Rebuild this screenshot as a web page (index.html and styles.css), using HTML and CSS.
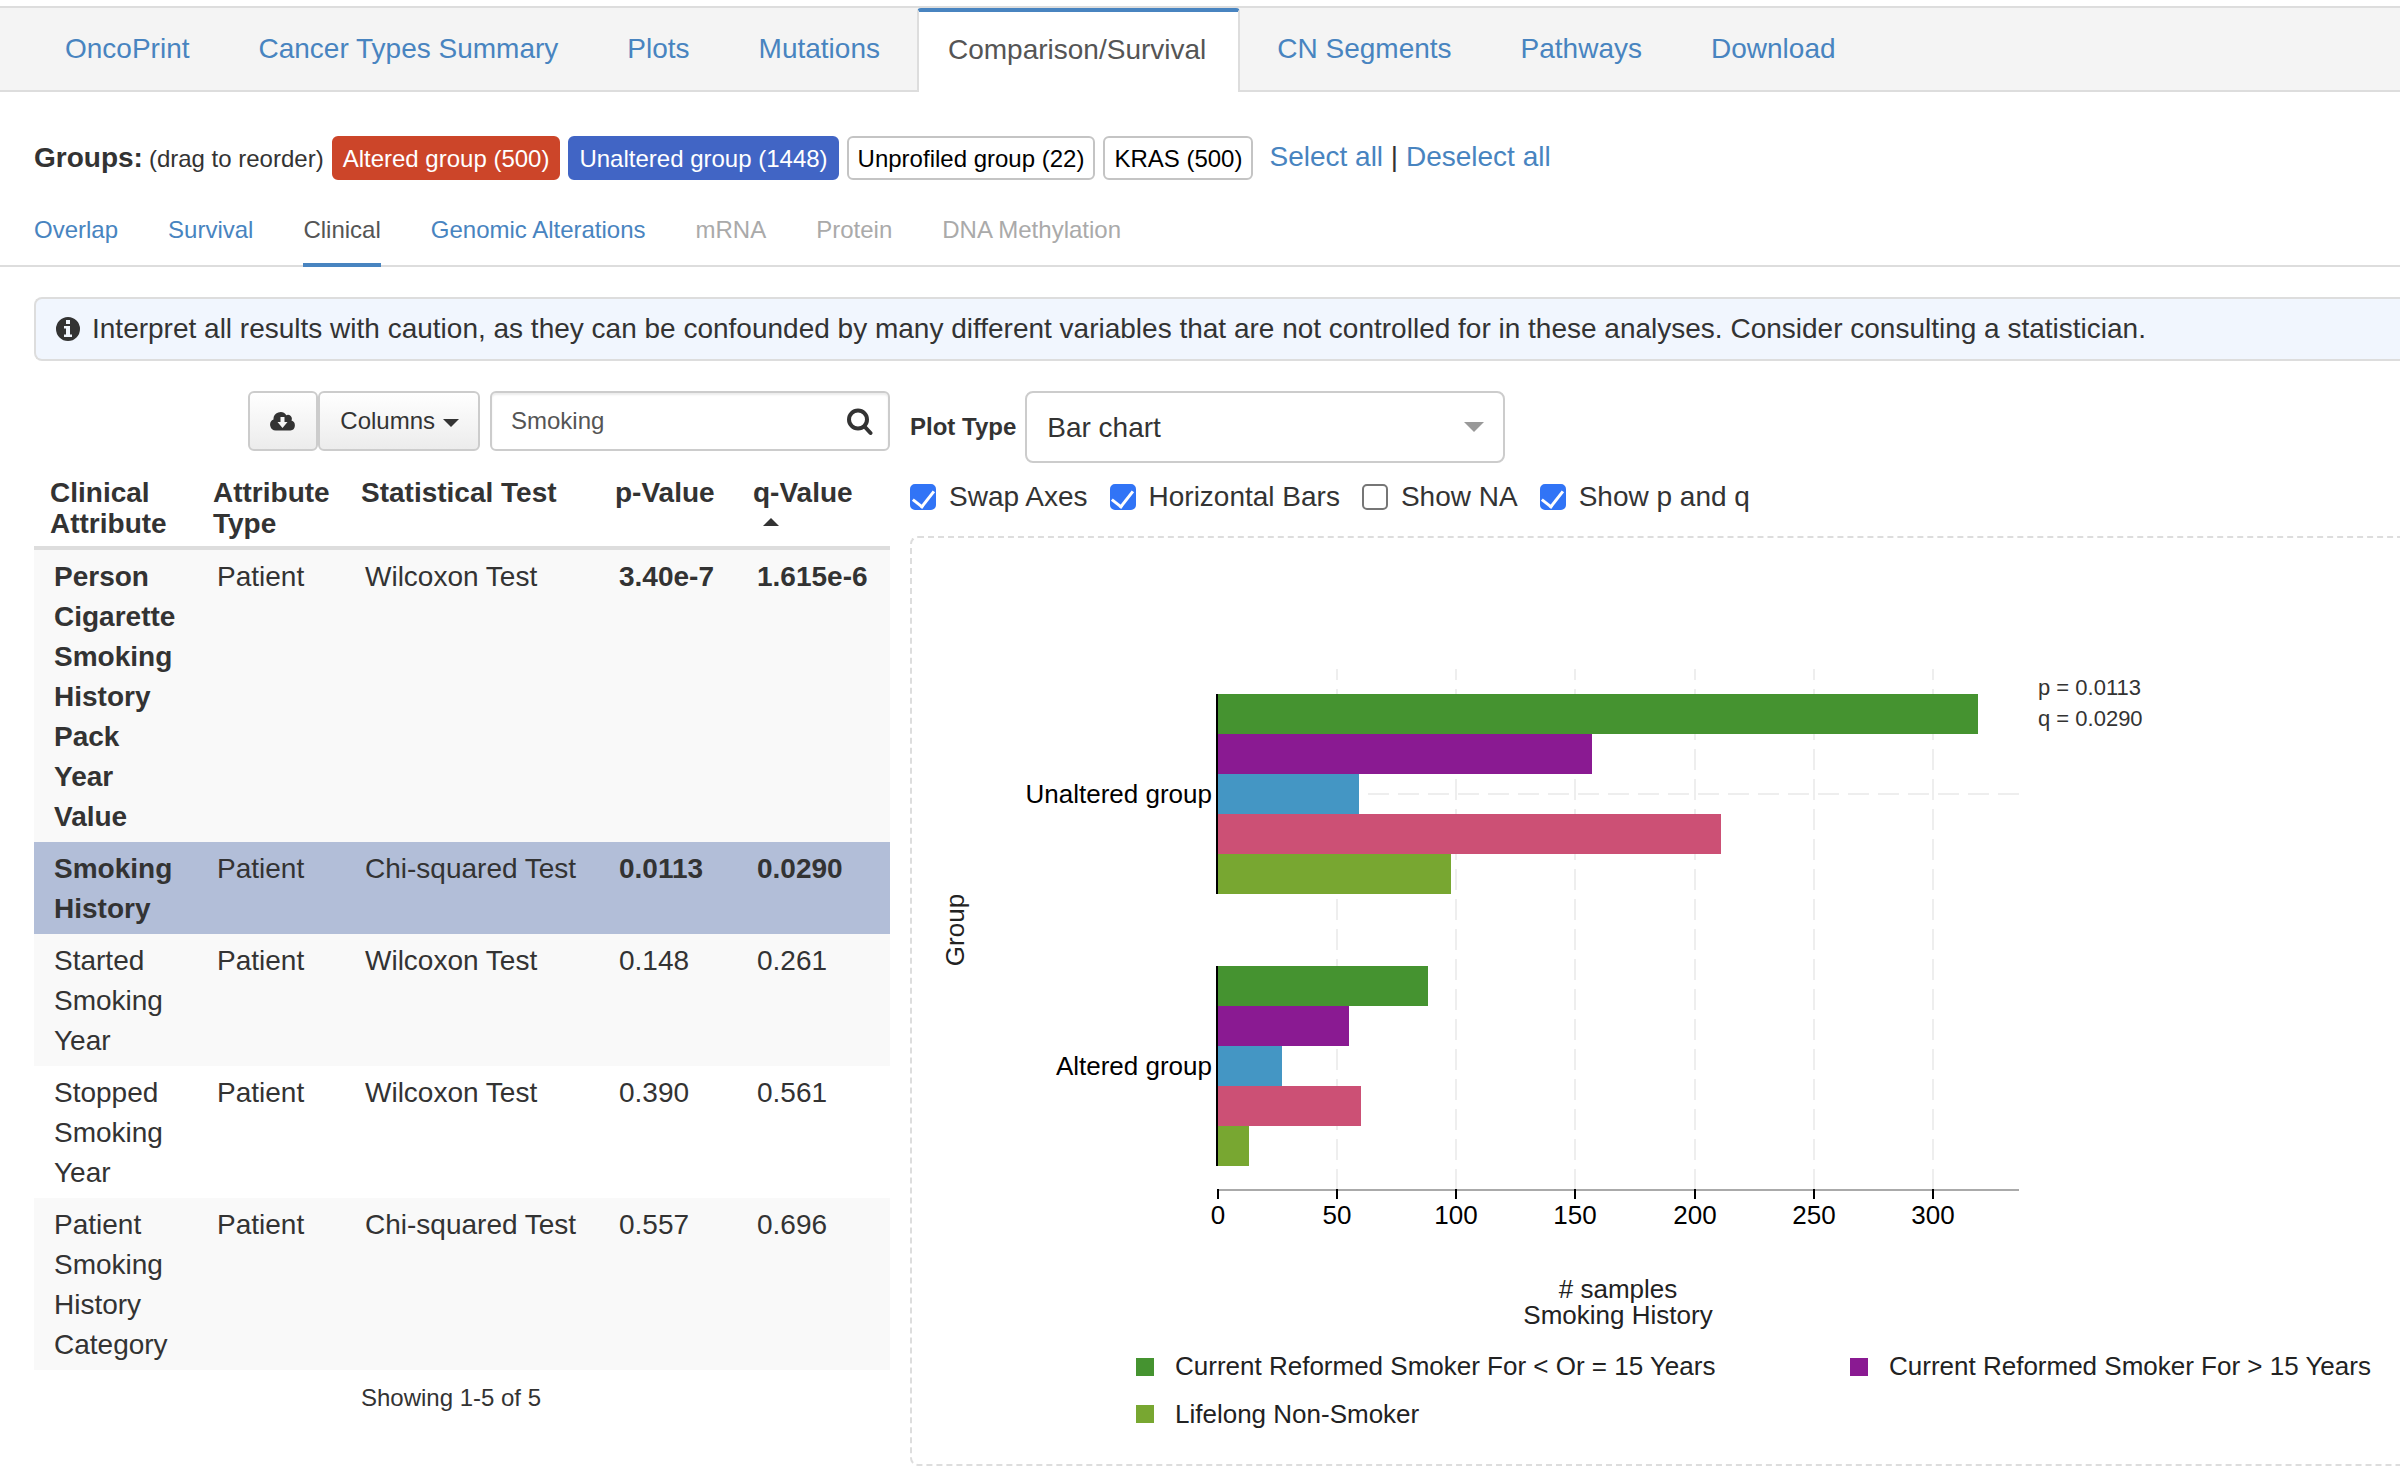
FILE: index.html
```html
<!DOCTYPE html>
<html lang="en">
<head>
<meta charset="utf-8">
<meta name="viewport" content="width=device-width, initial-scale=1">
<title>Comparison/Survival – Clinical</title>
<link rel="stylesheet" href="styles.css">
</head>
<body>
<nav class="main-tabs" aria-label="Results">
  <a class="main-tab" href="#oncoprint">OncoPrint</a>
  <a class="main-tab" href="#types">Cancer Types Summary</a>
  <a class="main-tab" href="#plots">Plots</a>
  <a class="main-tab" href="#mutations">Mutations</a>
  <a class="main-tab active" href="#comparison" aria-current="page">Comparison/Survival</a>
  <a class="main-tab" href="#segments">CN Segments</a>
  <a class="main-tab" href="#pathways">Pathways</a>
  <a class="main-tab" href="#download">Download</a>
</nav>

<section class="groups">
  <strong class="groups-title">Groups:</strong>
  <span class="groups-hint">(drag to reorder)</span>
  <div class="chips">
    <button type="button" class="chip chip-altered">Altered group (500)</button>
    <button type="button" class="chip chip-unaltered">Unaltered group (1448)</button>
    <button type="button" class="chip">Unprofiled group (22)</button>
    <button type="button" class="chip">KRAS (500)</button>
  </div>
  <div class="select-links"><a href="#all">Select all</a> | <a href="#none">Deselect all</a></div>
</section>

<nav class="sub-tabs" aria-label="Comparison">
  <a class="sub-tab" href="#overlap">Overlap</a>
  <a class="sub-tab" href="#survival">Survival</a>
  <a class="sub-tab active" href="#clinical" aria-current="page">Clinical</a>
  <a class="sub-tab" href="#genomic">Genomic Alterations</a>
  <a class="sub-tab disabled" aria-disabled="true">mRNA</a>
  <a class="sub-tab disabled" aria-disabled="true">Protein</a>
  <a class="sub-tab disabled" aria-disabled="true">DNA Methylation</a>
</nav>

<main class="content">
  <div class="notice">
    <svg class="notice-icon" viewBox="0 0 24 24" aria-hidden="true"><path fill="#333" fill-rule="evenodd" d="M12 0a12 12 0 1 1 0 24a12 12 0 0 1 0-24zM10 3v4h4v-4zM8 9v2.500h2v6h-2v2.500h8v-2.500h-2v-8.500z"/></svg>
    <span>Interpret all results with caution, as they can be confounded by many different variables that are not controlled for in these analyses. Consider consulting a statistician.</span>
  </div>

  <div class="panels">
    <section class="table-panel">
      <div class="toolbar">
        <div class="button-group">
          <button type="button" class="btn btn-download" aria-label="Download"><svg class="cloud" viewBox="0 0 26 20" aria-hidden="true"><path fill="#333" fill-rule="evenodd" d="M6 19.500A5.700 5.700 0 0 1 3.500 8.600A7 7 0 0 1 16.300 4.200A4 4 0 0 1 21.500 9.500A5.200 5.200 0 0 1 20.500 19.500zM10.500 6v5h-3l5 6l5-6h-3v-5z"/></svg></button>
          <button type="button" class="btn">Columns<span class="caret-down"></span></button>
        </div>
        <div class="search">
          <input type="text" class="search-input" value="Smoking" aria-label="Search attributes">
          <svg class="search-icon" viewBox="0 0 26 28" aria-hidden="true"><circle cx="11" cy="11.500" r="9" fill="none" stroke="#333" stroke-width="4"/><path d="M17.500 18.500l6 6.500" stroke="#333" stroke-width="4" stroke-linecap="round"/></svg>
        </div>
      </div>
      <table class="attributes">
        <colgroup><col class="c-name"><col class="c-type"><col class="c-test"><col class="c-p"><col class="c-q"></colgroup>
        <thead>
          <tr><th>Clinical Attribute</th><th>Attribute Type</th><th>Statistical Test</th><th>p-Value</th><th>q-Value<span class="caret-up"></span></th></tr>
        </thead>
        <tbody>
          <tr class="significant"><td>Person Cigarette Smoking History Pack Year Value</td><td>Patient</td><td>Wilcoxon Test</td><td>3.40e-7</td><td>1.615e-6</td></tr>
          <tr class="significant selected"><td>Smoking History</td><td>Patient</td><td>Chi-squared Test</td><td>0.0113</td><td>0.0290</td></tr>
          <tr><td>Started Smoking Year</td><td>Patient</td><td>Wilcoxon Test</td><td>0.148</td><td>0.261</td></tr>
          <tr><td>Stopped Smoking Year</td><td>Patient</td><td>Wilcoxon Test</td><td>0.390</td><td>0.561</td></tr>
          <tr><td>Patient Smoking History Category</td><td>Patient</td><td>Chi-squared Test</td><td>0.557</td><td>0.696</td></tr>
        </tbody>
      </table>
      <p class="table-count">Showing 1-5 of 5</p>
    </section>

    <section class="plot-panel">
      <div class="plot-type">
        <label for="plot-type">Plot Type</label>
        <div class="select-wrap">
          <select id="plot-type" class="select"><option>Bar chart</option></select>
        </div>
      </div>
      <div class="options">
        <label class="option"><input type="checkbox" class="check" checked>Swap Axes</label>
        <label class="option"><input type="checkbox" class="check" checked>Horizontal Bars</label>
        <label class="option"><input type="checkbox" class="check">Show NA</label>
        <label class="option"><input type="checkbox" class="check" checked>Show p and q</label>
      </div>
      <div class="plot-box">
        <svg class="plot" width="1488" height="926" viewBox="0 0 1488 926" role="img" aria-label="Smoking history by group">
          <g class="grid">
            <path d="M425 652V131M544 652V131M663 652V131M783 652V131M902 652V131M1021 652V131"/>
            <path d="M306 256H1107"/>
          </g>
          <g>
            <rect class="s1" x="306" y="156" width="760" height="40"/>
            <rect class="s2" x="306" y="196" width="374" height="40"/>
            <rect class="s3" x="306" y="236" width="141" height="40"/>
            <rect class="s4" x="306" y="276" width="503" height="40"/>
            <rect class="s5" x="306" y="316" width="233" height="40"/>
            <rect class="s1" x="306" y="428" width="210" height="40"/>
            <rect class="s2" x="306" y="468" width="131" height="40"/>
            <rect class="s3" x="306" y="508" width="64" height="40"/>
            <rect class="s4" x="306" y="548" width="143" height="40"/>
            <rect class="s5" x="306" y="588" width="31" height="40"/>
          </g>
          <path class="axis" d="M306 652H1107"/>
          <path class="tick" d="M305 156V356M305 428V628M306 651V661M425 651V661M544 651V661M663 651V661M783 651V661M902 651V661M1021 651V661"/>
          <g class="tick-label">
            <text x="306" y="686">0</text><text x="425" y="686">50</text><text x="544" y="686">100</text><text x="663" y="686">150</text><text x="783" y="686">200</text><text x="902" y="686">250</text><text x="1021" y="686">300</text>
          </g>
          <g class="group-label"><text x="300" y="265">Unaltered group</text><text x="300" y="537">Altered group</text></g>
          <g class="axis-title">
            <text x="706" y="760"># samples</text><text x="706" y="786">Smoking History</text>
            <text transform="translate(52 392) rotate(-90)">Group</text>
          </g>
          <g class="stats"><text x="1126" y="157">p = 0.0113</text><text x="1126" y="188">q = 0.0290</text></g>
          <g class="legend">
            <rect class="s1" x="224" y="820" width="18" height="18"/><text x="263" y="837">Current Reformed Smoker For &lt; Or = 15 Years</text>
            <rect class="s2" x="938" y="820" width="18" height="18"/><text x="977" y="837">Current Reformed Smoker For &gt; 15 Years</text>
            <rect class="s5" x="224" y="867" width="18" height="18"/><text x="263" y="885">Lifelong Non-Smoker</text>
          </g>
        </svg>
      </div>
    </section>
  </div>
</main>
</body>
</html>
```
FILE: styles.css
```css
* { box-sizing: border-box; }

body {
  margin: 0;
  padding-top: 6px;
  overflow-x: hidden;
  background: #fff;
  color: #333;
  font-family: "Liberation Sans", Arial, sans-serif;
  font-size: 28px;
  line-height: 40px;
}

a { color: #4884c0; text-decoration: none; }
button, input, select { font-family: inherit; }

/* main tabs */
.main-tabs {
  display: flex;
  gap: 5px;
  height: 86px;
  padding-left: 33px;
  border-top: 2px solid #ddd;
  border-bottom: 2px solid #ddd;
  background: #f4f4f4;
}
.main-tab {
  height: 84px;
  padding: 21px 32px;
  white-space: nowrap;
}
.main-tab.active {
  padding: 18px 32px 20px 29px;
  border: 2px solid #ddd;
  border-top: 4px solid #4884c0;
  border-bottom: 0;
  border-radius: 4px 4px 0 0;
  background: #fff;
  color: #555;
}

/* group chips */
.groups {
  display: flex;
  align-items: center;
  margin-top: 44px;
  padding-left: 34px;
  white-space: nowrap;
}
.groups-hint { margin: 0 8px 0 6px; padding-top: 2px; font-size: 24px; }
.chips { display: flex; gap: 8px; }
.chip {
  height: 44px;
  padding: 2px 9px 0;
  border: 2px solid #c4c4c4;
  border-radius: 6px;
  background: #fff;
  color: #000;
  font-size: 24px;
}
.chip-altered { border-color: #cc4529; background: #cc4529; color: #fff; }
.chip-unaltered { border-color: #4165c5; background: #4165c5; color: #fff; }
.select-links { margin-left: 16px; padding-bottom: 2px; }

/* comparison sub tabs */
.sub-tabs {
  display: flex;
  gap: 50px;
  height: 87px;
  padding: 30px 0 0 34px;
  border-bottom: 2px solid #ddd;
  font-size: 24px;
  line-height: 40px;
}
.sub-tab { height: 57px; white-space: nowrap; }
.sub-tab.active { border-bottom: 4px solid #4884c0; color: #555; }
.sub-tab.disabled { color: #aaa; }

.content { padding: 30px 0 0 34px; }

.notice {
  display: flex;
  align-items: center;
  gap: 12px;
  height: 64px;
  padding-left: 20px;
  border: 2px solid #ddd;
  border-right: 0;
  border-radius: 8px 0 0 8px;
  background: #f1f6fe;
  white-space: nowrap;
}
.notice-icon { flex: none; width: 24px; height: 24px; }

.panels { display: flex; gap: 20px; margin-top: 30px; }

/* attribute table */
.table-panel { flex: none; width: 856px; }
.toolbar { display: flex; justify-content: flex-end; gap: 10px; }
.button-group { display: flex; }
.btn {
  display: flex;
  align-items: center;
  height: 60px;
  padding: 0 19px 0 20px;
  border: 2px solid #ccc;
  border-radius: 6px;
  background: linear-gradient(#fff, #ececec);
  color: #333;
  font-size: 24px;
}
.btn-download { justify-content: center; width: 70px; padding: 0; }
.cloud { width: 26px; height: 20px; }
.caret-down {
  margin: 4px 0 0 8px;
  border: 8px solid transparent;
  border-top-color: #333;
  border-bottom: 0;
}
.search { position: relative; width: 400px; }
.search-input {
  width: 100%;
  height: 60px;
  padding: 0 60px 0 19px;
  border: 2px solid #ccc;
  border-radius: 6px;
  background: #fff;
  box-shadow: inset 0 2px 2px rgba(0, 0, 0, 0.08);
  color: #555;
  font-size: 24px;
}
.search-icon { position: absolute; top: 17px; right: 17px; width: 26px; height: 28px; }

.attributes { width: 100%; margin-top: 16px; border-collapse: collapse; table-layout: fixed; }
.c-name { width: 163px; }
.c-type { width: 148px; }
.c-test { width: 254px; }
.c-p { width: 138px; }
.attributes th {
  padding: 10px 0 7px 16px;
  border-bottom: 4px solid #ddd;
  line-height: 31px;
  text-align: left;
  vertical-align: top;
}
.attributes td { padding: 7px 16px 5px 20px; vertical-align: top; }
.attributes tbody tr:nth-child(odd) { background: #f9f9f9; }
.attributes tbody tr.selected { background: #b2bed8; }
.significant td:first-child, .significant td:nth-child(n+4) { font-weight: bold; }
.caret-up {
  display: block;
  width: 16px;
  margin: 10px 0 0 10px;
  border: 8px solid transparent;
  border-top: 0;
  border-bottom-color: #333;
}
.table-count { margin: 8px 22px 0 0; font-size: 24px; text-align: center; }

/* plot */
.plot-panel { flex: 1; min-width: 0; }
.plot-type { display: flex; align-items: center; gap: 9px; font-size: 24px; font-weight: bold; }
.select-wrap { position: relative; width: 480px; }
.select-wrap::after {
  content: "";
  position: absolute;
  top: 31px;
  right: 21px;
  border: 10px solid transparent;
  border-top-color: #999;
  border-bottom: 0;
  pointer-events: none;
}
.select {
  appearance: none;
  display: block;
  width: 100%;
  height: 72px;
  padding: 0 20px;
  border: 2px solid #ccc;
  border-radius: 8px;
  background: #fff;
  color: #333;
  font-size: 28px;
}
.options { display: flex; gap: 22px; margin-top: 14px; }
.option { display: flex; align-items: center; gap: 13px; white-space: nowrap; }
.check {
  appearance: none;
  display: grid;
  place-items: center;
  width: 26px;
  height: 26px;
  margin: 0;
  border: 2px solid #767676;
  border-radius: 5px;
  background: #fff;
}
.check:checked { border-color: #3174f6; background: #3174f6; }
.check:checked::before {
  content: "";
  width: 10px;
  height: 18px;
  margin-bottom: 3px;
  border: solid #fff;
  border-width: 0 3px 3px 0;
  transform: rotate(38deg);
}
.plot-box {
  margin-top: 19px;
  overflow: hidden;
  border: 2px dashed #ddd;
  border-right: 0;
  border-radius: 8px 0 0 8px;
}
.plot { display: block; font-size: 26px; }
.grid path { fill: none; stroke: #eee; stroke-width: 2; stroke-dasharray: 21 9; }
.axis { stroke: #aaa; stroke-width: 2; }
.tick { stroke: #000; stroke-width: 2; }
.tick-label { fill: #000; text-anchor: middle; }
.group-label { fill: #000; text-anchor: end; }
.axis-title { fill: #222; text-anchor: middle; }
.stats { fill: #333; font-size: 22px; }
.legend { fill: #222; }
.s1 { fill: #459330; }
.s2 { fill: #8a1a92; }
.s3 { fill: #4496c4; }
.s4 { fill: #cc5075; }
.s5 { fill: #78a731; }
```
